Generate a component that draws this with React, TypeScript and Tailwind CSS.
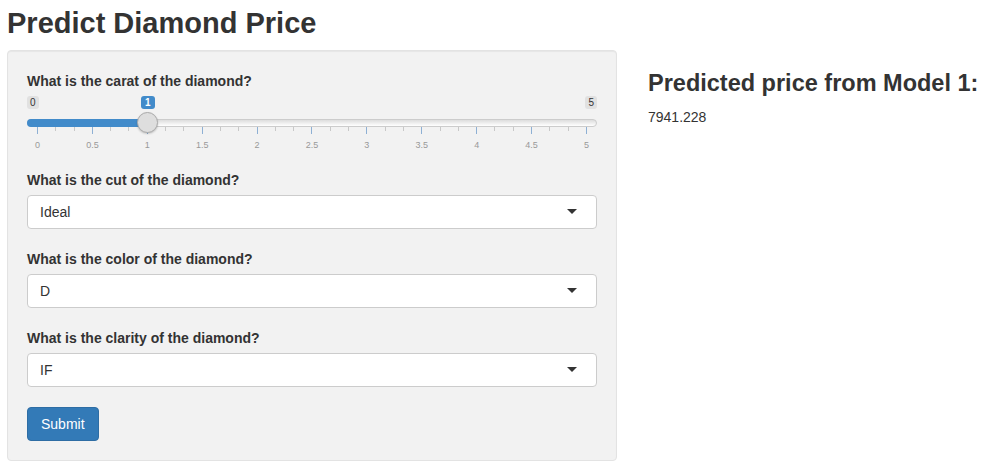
import { FunctionComponent } from "react";

const font = { fontFamily: '"Liberation Sans", Arial, sans-serif' };

const majors = [0, 0.5, 1, 1.5, 2, 2.5, 3, 3.5, 4, 4.5, 5];
// 10 steps of 0.5 with two small ticks between each pair
const ticks = Array.from({ length: 31 }, (_, i) => i);

const CaratSlider: FunctionComponent = () => {
  return (
    <div className="mb-[20px] w-full pt-[6px]">
      {/* min / value / max */}
      <div className="relative flex h-[13px] items-start justify-between">
        <span className="rounded-[3px] bg-[#e1e1e1] px-[3px] text-[10px] leading-[13px] text-[#333]">
          0
        </span>
        <span className="absolute left-[114px] top-0 rounded-[3px] bg-[#428bca] px-[4px] text-[10px] font-bold leading-[13px] text-white">
          1
        </span>
        <span className="rounded-[3px] bg-[#e1e1e1] px-[3px] text-[10px] leading-[13px] text-[#333]">
          5
        </span>
      </div>

      {/* track */}
      <div className="relative mt-[10px] h-[8px] rounded-full border border-[#cccccc] bg-gradient-to-b from-[#dddddd] to-white">
        <div className="-ml-px -mt-px h-[8px] w-[121px] rounded-l-full bg-[#428bca]" />
        <div className="absolute left-[109px] top-[-8px] h-[21px] w-[21px] rounded-full border border-[#aaaaaa] bg-[#dedede] shadow-[0_1px_2px_rgba(0,0,0,0.2)]" />
      </div>

      {/* grid ticks */}
      <div className="mx-[10px] flex h-[7px] items-start justify-between">
        {ticks.map((i) => (
          <div
            key={`tick-${i}`}
            className={
              i % 3 === 0 ? "h-[7px] w-px bg-[#8eb0d4]" : "h-[4px] w-px bg-[#c8c8c8]"
            }
          />
        ))}
      </div>

      {/* grid labels */}
      <div className="mx-[10px] mt-[6px] flex justify-between">
        {majors.map((v) => (
          <div key={`label-${v}`} className="flex w-px justify-center">
            <span className="whitespace-nowrap text-[9px] leading-[11px] text-[#999999]">
              {v}
            </span>
          </div>
        ))}
      </div>
    </div>
  );
};

const Caret: FunctionComponent = () => (
  <svg width="10" height="6" viewBox="0 0 10 6" className="shrink-0">
    <path d="M0 0 L10 0 L5 5 Z" fill="#333333" />
  </svg>
);

const Select: FunctionComponent<{ value: string; className?: string }> = ({
  value,
  className = "",
}) => (
  <div
    className={`flex h-[34px] w-full items-center justify-between rounded-[4px] border border-[#cccccc] bg-white pl-[12px] pr-[19px] text-[14px] text-[#333] ${className}`}
  >
    <span>{value}</span>
    <Caret />
  </div>
);

const Label: FunctionComponent<{ text: string; className?: string }> = ({
  text,
  className = "mb-[6px]",
}) => (
  <p className={`text-[14px] font-bold leading-[18px] text-[#333] ${className}`}>
    {text}
  </p>
);

export default function App() {
  return (
    <div className="min-h-[470px] bg-white pl-[7px] text-[#333]" style={font}>
      <h1 className="pt-[5px] text-[29px] font-bold leading-[36px] text-[#333]">
        Predict Diamond Price
      </h1>
      <div className="mt-[9px] flex items-start">
        <div className="flex w-[610px] flex-col items-stretch rounded-[4px] border border-[#e3e3e3] bg-[#f2f2f2] px-[19px] pb-[19px] pt-[21px] shadow-[inset_0_1px_1px_rgba(0,0,0,0.05)]">
          <Label text="What is the carat of the diamond?" className="" />
          <CaratSlider />

          <Label text="What is the cut of the diamond?" />
          <Select value="Ideal" className="mb-[21px]" />

          <Label text="What is the color of the diamond?" />
          <Select value="D" className="mb-[21px]" />

          <Label text="What is the clarity of the diamond?" />
          <Select value="IF" className="mb-[20px]" />

          <button className="h-[34px] self-start rounded-[4px] border border-[#2e6da4] bg-[#337ab7] px-[13px] text-[14px] text-white">
            Submit
          </button>
        </div>

        <div className="ml-[31px] pt-[19px]">
          <h3 className="text-[23.5px] font-bold leading-[28px] text-[#333]">
            Predicted price from Model 1:
          </h3>
          <p className="mt-[11px] text-[14px] leading-[18px] text-[#333]">
            7941.228
          </p>
        </div>
      </div>
    </div>
  );
}
